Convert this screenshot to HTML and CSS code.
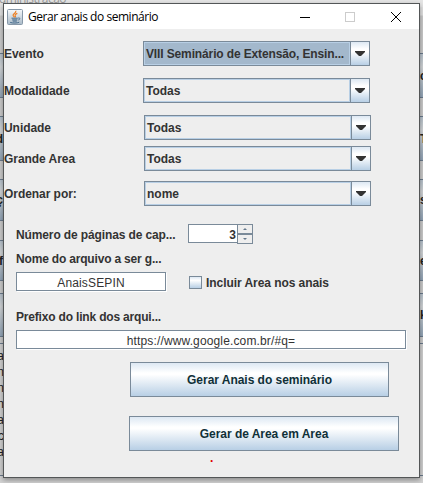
FILE: index.html
```html
<!DOCTYPE html>
<html lang="pt-BR">
<head>
<meta charset="utf-8">
<title>Gerar anais do seminário</title>
<link rel="stylesheet" href="styles.css">
</head>
<body>
<main class="desktop">
  <div class="parent-title">dministração</div>
  <div class="parent">
    <div class="slab s1"><span></span><span>c</span></div>
    <div class="slab s2"><span>d</span><span>T</span></div>
    <div class="slab s3"><span>ç</span><span>s</span></div>
    <div class="slab s4"><span>f</span><span>e</span></div>
    <div class="slab s5"><span></span><span>k</span></div>
    <div class="log"><p>a</p><p>n</p><p>n</p><p>n</p><p>a</p><p>c</p><p>a</p></div>
  </div>
  <section class="dialog">
    <header class="titlebar">
      <svg class="java" width="16" height="16" viewBox="0 0 16 16">
        <defs><linearGradient id="tile" x1="0" y1="0" x2="0" y2="1"><stop offset="0" stop-color="#f7f9fb"/><stop offset="1" stop-color="#a9bac8"/></linearGradient></defs>
        <rect x=".5" y=".5" width="15" height="15" rx="1" fill="url(#tile)" stroke="#8798a8"/>
        <path d="M8.8 1.8C9.5 4 5.8 4.7 6.1 6.3c.1.8 1 1.400 1.400 2M10.300 4.400C8.700 5 7.800 5.700 8.200 6.500c.4.7.5 1.100-.1 1.800" fill="none" stroke="#ee7f22" stroke-width="1.200"/>
        <path d="M4.500 9.200h6.300M5.200 10.900h5.200M5.700 12.100h4.100M3.200 13.400c2.500.9 7 .8 9-.2M11.200 9c2-.5 2.300 1.400.1 2" fill="none" stroke="#466b8c"/>
      </svg>
      <h1>Gerar anais do seminário</h1>
      <svg class="controls" width="104" height="12" viewBox="0 0 104 12" shape-rendering="crispEdges">
        <path d="M1 6.500h10" stroke="#000"/>
        <rect x="46.500" y="1.500" width="9" height="9" fill="none" stroke="#ccc"/>
        <path d="M92 1l10 10M102 1L92 11" stroke="#000" shape-rendering="auto"/>
      </svg>
    </header>
    <form class="form">
      <div class="row r1"><label>Evento</label><div class="combo selected"><span class="value v1">VIII Seminário de Extensão, Ensin...</span><i class="arrow"></i></div></div>
      <div class="row r2"><label class="l2">Modalidade</label><div class="combo"><span class="value">Todas</span><i class="arrow"></i></div></div>
      <div class="row r3"><label>Unidade</label><div class="combo"><span class="value">Todas</span><i class="arrow"></i></div></div>
      <div class="row r4"><label>Grande Area</label><div class="combo"><span class="value">Todas</span><i class="arrow"></i></div></div>
      <div class="row r5"><label>Ordenar por:</label><div class="combo"><span class="value">nome</span><i class="arrow"></i></div></div>
      <div class="pages"><label>Número de páginas de cap...</label><div class="spinner"><span class="number">3</span><span class="steps"><i class="up"></i><i class="down"></i></span></div></div>
      <div class="caption">Nome do arquivo a ser g...</div>
      <div class="file"><div class="field name"><span>AnaisSEPIN</span></div><i class="check"></i><label>Incluir Area nos anais</label></div>
      <div class="caption prefix">Prefixo do link dos arqui...</div>
      <div class="field link"><span>https://www.google.com.br/#q=</span></div>
      <div class="button b1"><span>Gerar Anais do seminário</span></div>
      <div class="button b2"><span>Gerar de Area em Area</span></div>
      <div class="status">.</div>
    </form>
  </section>
</main>
</body>
</html>
```
FILE: styles.css
```css
* { box-sizing: border-box; }
body { margin: 0; font: bold 12px/14px "Liberation Sans", Arial, sans-serif; color: #333; }
.desktop { position: relative; width: 423px; height: 483px; overflow: hidden; background: #d2d2d2; }
.parent-title { height: 15px; margin: -8px 0 0 -1px; font: 12px/14px "Open Sans", sans-serif; letter-spacing: -.5px; color: #999; background: #e5e5e5; }
.parent { padding-top: 46px; background: linear-gradient(#e0e0e0 8px, #c9c9c9 9px); }
.slab { display: flex; justify-content: space-between; align-items: center; height: 45px; margin-bottom: 18px; border: solid #69798b; border-width: 1px 0; background: linear-gradient(#b5c0ca, #d0d3d5 30%, #91a3b5); overflow: hidden; }
.slab span { width: 3px; display: flex; justify-content: flex-end; color: #222; }
.slab span:last-child { justify-content: flex-start; }
.s3 { height: 42px; margin-bottom: 19px; }
.s4 { height: 41px; margin-bottom: 12px; }
.s5 { height: 44px; margin-bottom: 6px; }
.log { height: 133px; padding-top: 4px; border: solid #69798b; border-width: 1px 0; background: #cfcfcf; font: 12px/16px "Liberation Sans", Arial, sans-serif; color: #222; }
.log p { margin: 0; width: 4px; display: flex; justify-content: flex-end; }
.dialog { position: absolute; left: 3px; top: 3px; width: 417px; height: 475px; border: 1px solid #535657; background: #eee; box-shadow: 0 2px 5px rgba(0,0,0,.35); }
.titlebar { display: flex; align-items: center; height: 25px; background: #fff; padding: 0 16px 0 3px; }
.titlebar h1 { margin: 0 0 0 5px; font: 12px/16px "Open Sans", sans-serif; letter-spacing: -.46px; color: #000; white-space: nowrap; }
.controls { margin-left: auto; }
.form { white-space: nowrap; }
.row { display: flex; align-items: center; height: 25px; }
.row label { width: 139px; letter-spacing: -.05px; }
.r1 { margin-top: 12px; }
.r2 { margin-top: 12px; }
.r3 { margin-top: 12px; }
.r4 { margin-top: 6px; }
.r5 { margin-top: 10px; }
.r3 label, .r4 label, .r5 label { width: 140px; }
.combo { display: flex; width: 227px; height: 25px; border: 1px solid #7a8a99; }
.value { width: 206px; border: 1px solid #b8cfe5; padding: 4px 0 0 1px; }
.v1 { letter-spacing: -.13px; }
.selected .value { background: #a3b8cc; }
.arrow { display: flex; align-items: center; justify-content: center; width: 19px; border-left: 1px solid #7a8a99; background: linear-gradient(#dde8f3, #fff 30%, #fff 42%, #b8cfe5); }
.arrow::before { content: ""; width: 10px; height: 5px; background: #333; clip-path: polygon(0 0, 100% 0, 100% 20%, 60% 100%, 40% 100%, 0 20%); }
.pages { display: flex; margin: 18px 0 0 12px; height: 20px; }
.pages label { width: 172px; padding-top: 4px; letter-spacing: -.12px; }
.spinner { display: flex; }
.number { width: 49px; height: 19px; border: 1px solid #7a8a99; border-right: 0; background: #fff; text-align: right; padding: 3px 1px 0 0; }
.steps { width: 16px; }
.steps i { display: flex; align-items: center; justify-content: center; height: 10px; border: 1px solid #7a8a99; }
.steps i::before { content: ""; width: 4px; height: 2px; background: #65788b; }
.steps .up::before { clip-path: polygon(50% 0, 100% 100%, 0 100%); }
.steps .down::before { clip-path: polygon(0 0, 100% 0, 50% 100%); }
.caption { margin: 8px 0 0 12px; height: 14px; letter-spacing: -.18px; }
.file { display: flex; margin: 6px 0 0 12px; height: 20px; }
.field { height: 19px; border: 1px solid #7a8a99; background: #fff; box-shadow: 1px 1px #fff; text-align: center; font-weight: normal; padding-top: 3px; letter-spacing: .14px; }
.name { width: 150px; }
.check { width: 13px; height: 13px; margin: 4px 4px 0 23px; border: 1px solid #7a8a99; background: linear-gradient(#dde8f3, #fff 30%, #b8cfe5); }
.file label { padding-top: 4px; letter-spacing: -.06px; }
.prefix { margin-top: 18px; }
.link { width: 390px; margin: 6px 0 0 12px; }
.button { display: flex; align-items: center; justify-content: center; height: 35px; border: 1px solid #7a8a99; background: linear-gradient(#dde8f3, #fff 30%, #fff 35%, #b8cfe5); color: #103038; letter-spacing: -.03px; }
.b1 { width: 259px; margin: 13px 0 0 126px; }
.b2 { width: 270px; margin: 19px 0 0 125px; }
.status { margin: 0 0 0 206px; color: #e00000; }
```
